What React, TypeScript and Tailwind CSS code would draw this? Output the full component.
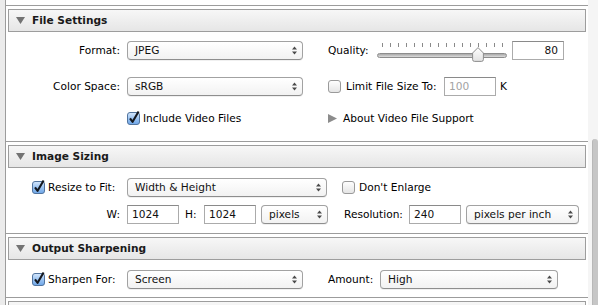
import React from "react";

const F = "font-['DejaVu_Sans',sans-serif]";

function Arrows() {
  return (
    <svg width="5" height="9" viewBox="0 0 5 9" className="shrink-0">
      <path d="M2.5 0.5 L5 3.5 H0 Z M0 5.5 H5 L2.5 8.5 Z" fill="#4a4a4a" />
    </svg>
  );
}

function Select({ value, className }: { value: string; className: string }) {
  return (
    <div
      className={`h-[19px] rounded-[4px] border border-[#a2a2a2] border-b-[#8e8e8e] bg-gradient-to-b from-white to-[#f2f2f2] shadow-[0_1px_0_rgba(0,0,0,0.06)] flex items-center pl-[7px] pr-[5px] justify-between text-[#111] ${className}`}
    >
      <span className="leading-none">{value}</span>
      <Arrows />
    </div>
  );
}

function Input({ value, className, right, dim }: { value: string; className: string; right?: boolean; dim?: boolean }) {
  return (
    <div
      className={`h-[19px] border border-[#ababab] border-t-[#8a8a8a] bg-white flex items-center ${right ? "justify-end pr-[5px]" : "pl-[4px]"} ${dim ? "text-[#a3a3a3]" : "text-[#111]"} ${className}`}
    >
      <span className="leading-none">{value}</span>
    </div>
  );
}

function Check({ checked }: { checked: boolean }) {
  if (!checked)
    return (
      <svg width="13" height="13" viewBox="0 0 13 13" className="shrink-0">
        <defs>
          <linearGradient id="cbu" x1="0" y1="0" x2="0" y2="1">
            <stop offset="0" stopColor="#ffffff" />
            <stop offset="1" stopColor="#e4e4e4" />
          </linearGradient>
        </defs>
        <rect x="0.5" y="0.5" width="12" height="12" rx="2.5" fill="url(#cbu)" stroke="#9a9a9a" />
      </svg>
    );
  return (
    <svg width="13" height="13" viewBox="0 0 13 13" className="shrink-0 overflow-visible">
      <defs>
        <linearGradient id="cbc" x1="0" y1="0" x2="0" y2="1">
          <stop offset="0" stopColor="#d6e8fc" />
          <stop offset="0.5" stopColor="#9cc4f2" />
          <stop offset="1" stopColor="#6ea6e8" />
        </linearGradient>
      </defs>
      <rect x="0.5" y="0.5" width="12" height="12" rx="2.5" fill="url(#cbc)" stroke="#52749e" />
      <path d="M3 6.3 L5.6 9.8 L11.6 -0.6" stroke="#14181f" strokeWidth="2.1" fill="none" strokeLinejoin="round" />
    </svg>
  );
}

function DownTri() {
  return (
    <svg width="9" height="7" viewBox="0 0 9 7" className="shrink-0">
      <path d="M0 0 H9 L4.5 7 Z" fill="#737373" />
    </svg>
  );
}

function Header({ title }: { title?: string }) {
  return (
    <div className="mx-[2px] h-[23px] border border-[#9d9d9d] bg-gradient-to-b from-[#f7f7f7] to-[#e6e6e6] flex items-center pl-[7px]">
      {title && (
        <>
          <DownTri />
          <span className="ml-[7px] font-bold text-[10.6px] text-[#1a1a1a] leading-none">{title}</span>
        </>
      )}
    </div>
  );
}

function Slider() {
  const ticks = Array.from({ length: 16 }, (_, i) => i);
  return (
    <div className="relative w-[130px] h-[19px]">
      <div className="absolute left-[5px] top-[2px] flex gap-[7px]">
        {ticks.map((t) => (
          <div key={t} className="w-px h-[4px] bg-[#8a8a8a]" />
        ))}
      </div>
      <div className="absolute left-0 right-0 top-[12px] h-[5px] rounded-full border border-[#8d8d8d] bg-gradient-to-b from-[#a9a9a9] to-[#dcdcdc]" />
      <svg width="12" height="15" viewBox="0 0 12 15" className="absolute left-[95px] top-[6px]">
        <defs>
          <linearGradient id="thm" x1="0" y1="0" x2="0" y2="1">
            <stop offset="0" stopColor="#ffffff" />
            <stop offset="1" stopColor="#e2e2e2" />
          </linearGradient>
        </defs>
        <path d="M6 0.6 L11.4 6 V12.5 Q11.4 14.4 9.5 14.4 H2.5 Q0.6 14.4 0.6 12.5 V6 Z" fill="url(#thm)" stroke="#8c8c8c" />
      </svg>
    </div>
  );
}

export default function App() {
  return (
    <div className={`w-[598px] h-[305px] overflow-hidden flex bg-white text-[10.6px] ${F}`}>
      <div className="w-[5px] bg-[#ebebeb]" />
      <div className="flex-1 border-l border-[#9c9c9c] pt-[5px] flex flex-col">
        {/* File Settings */}
        <div className="border-t border-[#9c9c9c] pt-[3px]">
          <Header title="File Settings" />
          <div className="h-[109px] pt-[9px]">
            <div className="flex items-center h-[19px]">
              <div className="w-[114px] text-right">Format:</div>
              <Select value="JPEG" className="ml-[7px] w-[176px]" />
              <div className="ml-[25px] w-[49px]">Quality:</div>
              <Slider />
              <Input value="80" right className="ml-[5px] w-[52px]" />
            </div>
            <div className="flex items-center h-[19px] mt-[17px]">
              <div className="w-[114px] text-right">Color Space:</div>
              <Select value="sRGB" className="ml-[7px] w-[176px]" />
              <div className="ml-[25px] flex items-center">
                <Check checked={false} />
                <div className="ml-[5px] w-[98px]">Limit File Size To:</div>
              </div>
              <Input value="100" dim className="w-[52px]" />
              <div className="ml-[4px]">K</div>
            </div>
            <div className="flex items-center h-[19px] mt-[13px]">
              <div className="w-[121px]" />
              <Check checked />
              <div className="ml-[3px] w-[185px]">Include Video Files</div>
              <svg width="9" height="9" viewBox="0 0 9 9" className="shrink-0">
                <path d="M0 0 L9 4.5 L0 9 Z" fill="#8c8c8c" />
              </svg>
              <div className="ml-[6px]">About Video File Support</div>
            </div>
          </div>
        </div>
        {/* Image Sizing */}
        <div className="border-t border-[#9c9c9c] pt-[3px]">
          <Header title="Image Sizing" />
          <div className="h-[65px] pt-[10px]">
            <div className="flex items-center h-[19px]">
              <div className="w-[121px] pl-[26px] flex items-center">
                <Check checked />
                <span className="ml-[3px]">Resize to Fit:</span>
              </div>
              <Select value="Width & Height" className="w-[200px]" />
              <div className="ml-[15px]">
                <Check checked={false} />
              </div>
              <div className="ml-[4px]">Don't Enlarge</div>
            </div>
            <div className="flex items-center h-[19px] mt-[8px]">
              <div className="w-[114px] text-right">W:</div>
              <Input value="1024" className="ml-[7px] w-[52px]" />
              <div className="ml-[6px] w-[19px]">H:</div>
              <Input value="1024" className="w-[52px]" />
              <Select value="pixels" className="ml-[5px] w-[67px]" />
              <div className="ml-[16px] w-[65px]">Resolution:</div>
              <Input value="240" className="w-[52px]" />
              <Select value="pixels per inch" className="ml-[5px] w-[113px]" />
            </div>
          </div>
        </div>
        {/* Output Sharpening */}
        <div className="border-t border-[#9c9c9c] pt-[3px]">
          <Header title="Output Sharpening" />
          <div className="h-[37px] pt-[10px]">
            <div className="flex items-center h-[19px]">
              <div className="w-[121px] pl-[26px] flex items-center">
                <Check checked />
                <span className="ml-[3px]">Sharpen For:</span>
              </div>
              <Select value="Screen" className="w-[176px]" />
              <div className="ml-[25px] w-[52px]">Amount:</div>
              <Select value="High" className="w-[178px]" />
            </div>
          </div>
        </div>
        {/* Next section (cut off) */}
        <div className="border-t border-[#9c9c9c] pt-[3px]">
          <Header />
        </div>
      </div>
      <div className="w-[10px] bg-[#f5f5f5] pl-[4px] pt-[139px] flex">
        <div className="flex-1 rounded-t-[4px] bg-[#c6c6c6] border-l border-[#b8b8b8]" />
      </div>
    </div>
  );
}
